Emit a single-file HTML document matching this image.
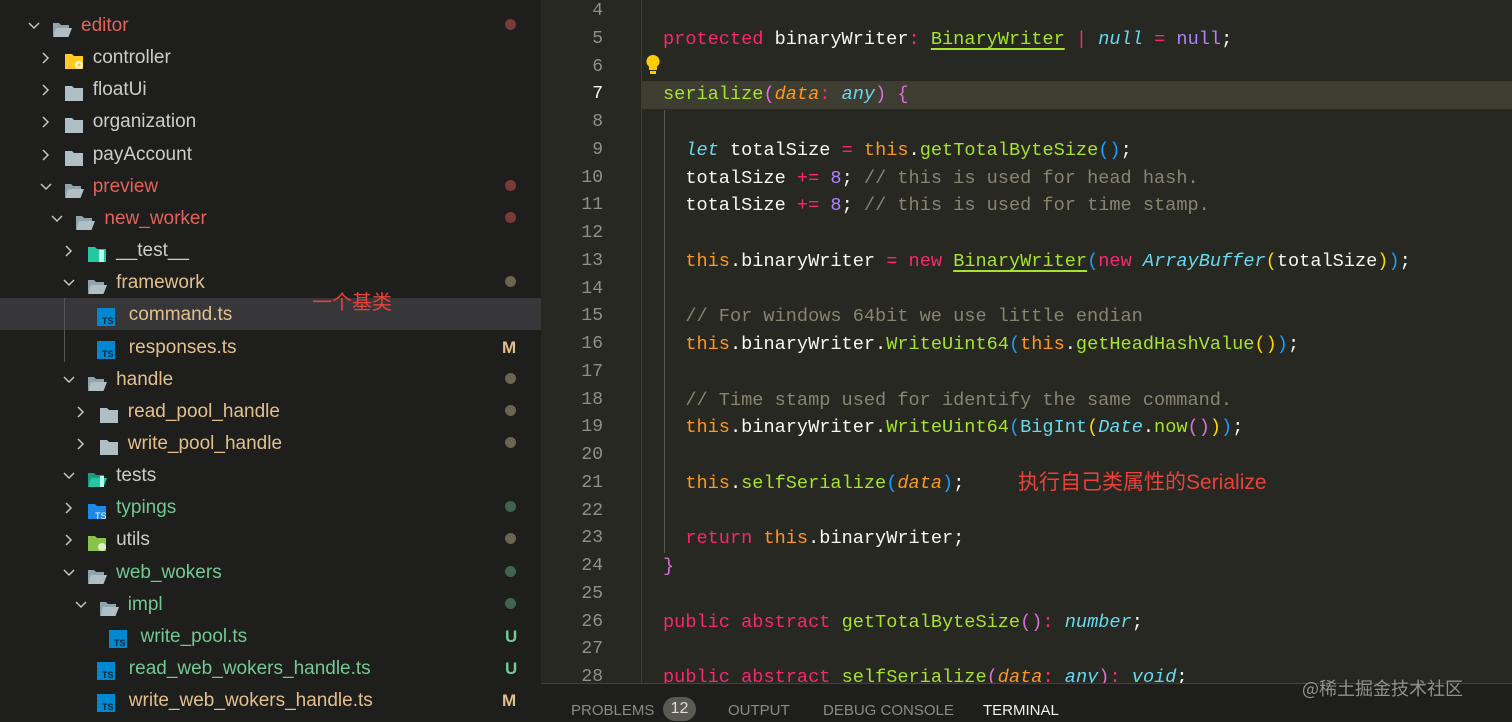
<!DOCTYPE html>
<html><head><meta charset="utf-8"><style>
*{margin:0;padding:0;box-sizing:border-box}
body{width:1512px;height:722px;overflow:hidden;background:#272822;position:relative;font-family:"Liberation Sans","Noto Sans CJK SC",sans-serif}
#side{position:absolute;left:0;top:0;width:541px;height:722px;background:#1e1e1d;overflow:hidden}
.row{position:absolute;left:0;width:541px;height:32px;font-size:19px;line-height:32px;color:#cccccc;white-space:nowrap}
.row .t{position:absolute;top:0}
.chev{position:absolute;top:9px;width:14px;height:14px}
.ic{position:absolute;top:8px}
.dot{position:absolute;left:505px;top:11px;width:11px;height:11px;border-radius:50%}
.badge{position:absolute;left:502px;top:0;font-weight:bold;font-size:17px}
.red{color:#e1635a}.yel{color:#e2c08d}.grn{color:#73c991}
#code{position:absolute;left:541px;top:0;width:971px;height:683px;overflow:hidden}
.ln{position:absolute;left:0;width:62px;text-align:right;font-family:"Liberation Mono",monospace;font-size:18px;color:#90908a;height:27.75px;line-height:27.75px}
.cl{position:absolute;left:122px;font-family:"Liberation Mono",monospace;font-size:18.6px;color:#f8f8f2;height:27.75px;line-height:27.75px;white-space:pre}
.k{color:#f92672}.f{color:#a6e22e}.ty{color:#66d9ef;font-style:italic}.p{color:#fd971f;font-style:italic}.th{color:#fd971f}.n{color:#ae81ff}.c{color:#88846f}
.u{text-decoration:underline;text-decoration-color:#a6e22e;text-underline-offset:4px;text-decoration-thickness:2px}
.b1{color:#179fff}.b2{color:#ffd700}.b3{color:#da70d6}
#panel{position:absolute;left:541px;top:683px;width:971px;height:39px;background:#1e1f1c;border-top:1px solid #414339;font-family:"Liberation Sans",sans-serif;font-size:15px;color:#8a8a85}
#panel span{position:absolute;top:18px}
</style></head><body>
<div id="side">
<div style="position:absolute;left:0;top:298px;width:541px;height:32px;background:#37373a"></div>
<div style="position:absolute;left:64px;top:298px;width:1px;height:64px;background:#555"></div>
</div>
<div id="code">
<div style="position:absolute;left:100px;top:0;width:1px;height:683px;background:#3b3c35"></div>
<div style="position:absolute;left:100px;top:81px;width:871px;height:28px;background:#3e3d32"></div>
<div style="position:absolute;left:123px;top:110px;width:1px;height:443px;background:#55564d"></div>
<svg style="position:absolute;left:104px;top:54px" width="16" height="22" viewBox="0 0 16 22"><path d="M8 1a6.5 6.5 0 0 0-4 11.7V16h8v-3.3A6.5 6.5 0 0 0 8 1z" fill="#ffcc00"/><rect x="5" y="17" width="6" height="3" fill="#ffcc00"/></svg>
<div style="position:absolute;left:477px;top:466px;font-size:21px;color:#e8423a;white-space:nowrap;font-family:'Liberation Sans','Noto Sans CJK SC',sans-serif">执行自己类属性的Serialize</div>
</div>
<div style="position:absolute;left:312px;top:286px;font-size:20px;color:#e8423a;font-family:'Noto Sans CJK SC',sans-serif">一个基类</div>
<div id="panel">
<span style="left:30px;top:18px">PROBLEMS</span>
<span style="left:122px;top:13px;width:33px;height:24px;border-radius:12px;background:#5a5a52;color:#ddd;text-align:center;line-height:24px;font-size:16px">12</span>
<span style="left:187px">OUTPUT</span>
<span style="left:282px">DEBUG CONSOLE</span>
<span style="left:442px;color:#f0f0f0">TERMINAL</span>
</div>
<div style="position:absolute;left:1302px;top:675px;font-size:18px;color:#8f8f8f;white-space:nowrap;z-index:5;font-family:'Noto Sans CJK SC',sans-serif">@稀土掘金技术社区</div>
<script>
const rows=[
['editor',0,'d','open','red','#7a3a3a'],
['controller',1,'r','ctrl','',null],
['floatUi',1,'r','closed','',null],
['organization',1,'r','closed','',null],
['payAccount',1,'r','closed','',null],
['preview',1,'d','open','red','#7a3a3a'],
['new_worker',2,'d','open','red','#7a3a3a'],
['__test__',3,'r','test','',null],
['framework',3,'d','open','yel','#6b6450'],
['command.ts',4,'','ts','yel',null],
['responses.ts',4,'','ts','yel','M'],
['handle',3,'d','open','yel','#6b6450'],
['read_pool_handle',4,'r','closed','yel','#6b6450'],
['write_pool_handle',4,'r','closed','yel','#6b6450'],
['tests',3,'d','testo','',null],
['typings',3,'r','tsf','grn','#3f6450'],
['utils',3,'r','util','','#6b6450'],
['web_wokers',3,'d','open','grn','#3f6450'],
['impl',4,'d','open','grn','#3f6450'],
['write_pool.ts',5,'','ts','grn','U'],
['read_web_wokers_handle.ts',4,'','ts','grn','U'],
['write_web_wokers_handle.ts',4,'','ts','yel','M']];
const side=document.getElementById('side');
const icons={
open:'<svg width="20" height="17" viewBox="0 0 20 17"><path d="M1 2h6l2 2h8v3H5L1 15z" fill="#90a4ae"/><path d="M4 7h16l-3.5 9H1z" fill="#b0bec5"/></svg>',
closed:'<svg width="20" height="17" viewBox="0 0 20 17"><path d="M1 1h7l2 2h9v13H1z" fill="#b0bec5"/></svg>',
ctrl:'<svg width="20" height="17" viewBox="0 0 20 17"><path d="M1 1h7l2 2h9v13H1z" fill="#ffca28"/><circle cx="15" cy="12" r="4" fill="#fff3c4"/><circle cx="15" cy="12" r="1.6" fill="#ffca28"/></svg>',
test:'<svg width="20" height="17" viewBox="0 0 20 17"><path d="M1 1h7l2 2h9v13H1z" fill="#26c6a0"/><rect x="12" y="4" width="5" height="12" fill="#b2fff0"/></svg>',
testo:'<svg width="20" height="17" viewBox="0 0 20 17"><path d="M1 2h6l2 2h8v3H5L1 15z" fill="#1a9c80"/><path d="M4 7h16l-3.5 9H1z" fill="#26c6a0"/><rect x="13" y="5" width="4" height="11" fill="#b2fff0"/></svg>',
tsf:'<svg width="20" height="17" viewBox="0 0 20 17"><path d="M1 1h7l2 2h9v13H1z" fill="#1e88e5"/><text x="8" y="16" font-size="9" fill="#fff" font-family="Liberation Sans">TS</text></svg>',
util:'<svg width="20" height="17" viewBox="0 0 20 17"><path d="M1 1h7l2 2h9v13H1z" fill="#8bc34a"/><circle cx="15" cy="12" r="4" fill="#dcedc8"/></svg>',
ts:'<svg width="18" height="18" viewBox="0 0 18 18"><rect width="18" height="18" fill="#0288d1"/><text x="5" y="16" font-size="9" fill="#0b2a3e" font-family="Liberation Sans" font-weight="bold">TS</text></svg>'};
rows.forEach((r,i)=>{
 const top=10+i*32.15;const lv=r[1];const x0=33+lv*11.7;
 let h='';
 if(r[2]){h+=`<svg class="chev" style="left:${x0-6}px" viewBox="0 0 14 14"><path d="${r[2]=='d'?'M2 4l5 5 5-5':'M4 2l5 5-5 5'}" fill="none" stroke="#c5c5c5" stroke-width="1.5"/></svg>`}
 const ix=r[3]=='ts'?x0+17:x0+19;
 h+=`<span class="ic" style="left:${ix}px;top:${r[3]=='ts'?6:7}px">${icons[r[3]]}</span>`;
 const tx=r[3]=='ts'?x0+49:x0+48;
 h+=`<span class="t ${r[4]}" style="left:${tx}px">${r[0]}</span>`;
 if(r[5]){ if(r[5].length==1){h+=`<span class="badge ${r[5]=='U'?'grn':'yel'}" style="left:${r[5]=='U'?505:502}px">${r[5]}</span>`} else h+=`<span class="dot" style="background:${r[5]};top:9px"></span>`}
 const d=document.createElement('div');d.className='row';d.style.top=top+'px';d.innerHTML=h;side.appendChild(d);
});
const code=[
'',
'<span class="k">protected</span> binaryWriter<span class="k">:</span> <span class="f u">BinaryWriter</span> <span class="k">|</span> <span class="ty">null</span> <span class="k">=</span> <span class="n">null</span>;',
'',
'<span class="f">serialize</span><span class="b3">(</span><span class="p">data</span><span class="k">:</span> <span class="ty">any</span><span class="b3">)</span> <span class="b3">{</span>',
'',
'  <span class="ty">let</span> totalSize <span class="k">=</span> <span class="th">this</span>.<span class="f">getTotalByteSize</span><span class="b1">()</span>;',
'  totalSize <span class="k">+=</span> <span class="n">8</span>; <span class="c">// this is used for head hash.</span>',
'  totalSize <span class="k">+=</span> <span class="n">8</span>; <span class="c">// this is used for time stamp.</span>',
'',
'  <span class="th">this</span>.binaryWriter <span class="k">=</span> <span class="k">new</span> <span class="f u">BinaryWriter</span><span class="b1">(</span><span class="k">new</span> <span class="ty">ArrayBuffer</span><span class="b2">(</span>totalSize<span class="b2">)</span><span class="b1">)</span>;',
'',
'  <span class="c">// For windows 64bit we use little endian</span>',
'  <span class="th">this</span>.binaryWriter.<span class="f">WriteUint64</span><span class="b1">(</span><span class="th">this</span>.<span class="f">getHeadHashValue</span><span class="b2">()</span><span class="b1">)</span>;',
'',
'  <span class="c">// Time stamp used for identify the same command.</span>',
'  <span class="th">this</span>.binaryWriter.<span class="f">WriteUint64</span><span class="b1">(</span><span class="f" style="color:#66d9ef">BigInt</span><span class="b2">(</span><span class="ty">Date</span>.<span class="f">now</span><span class="b3">()</span><span class="b2">)</span><span class="b1">)</span>;',
'',
'  <span class="th">this</span>.<span class="f">selfSerialize</span><span class="b1">(</span><span class="p">data</span><span class="b1">)</span>;',
'',
'  <span class="k">return</span> <span class="th">this</span>.binaryWriter;',
'<span class="b3">}</span>',
'',
'<span class="k">public</span> <span class="k">abstract</span> <span class="f">getTotalByteSize</span><span class="b3">()</span><span class="k">:</span> <span class="ty">number</span>;',
'',
'<span class="k">public</span> <span class="k">abstract</span> <span class="f">selfSerialize</span><span class="b3">(</span><span class="p">data</span><span class="k">:</span> <span class="ty">any</span><span class="b3">)</span><span class="k">:</span> <span class="ty">void</span>;'];
const ce=document.getElementById('code');
code.forEach((c,i)=>{const top=-2+i*27.75;
 const l=document.createElement('div');l.className='ln';l.style.top=top+'px';l.textContent=i+4;if(i==3)l.style.color='#f8f8f2';ce.appendChild(l);
 const d=document.createElement('div');d.className='cl';d.style.top=top+'px';d.innerHTML=c;ce.appendChild(d);});
</script>
</body></html>
